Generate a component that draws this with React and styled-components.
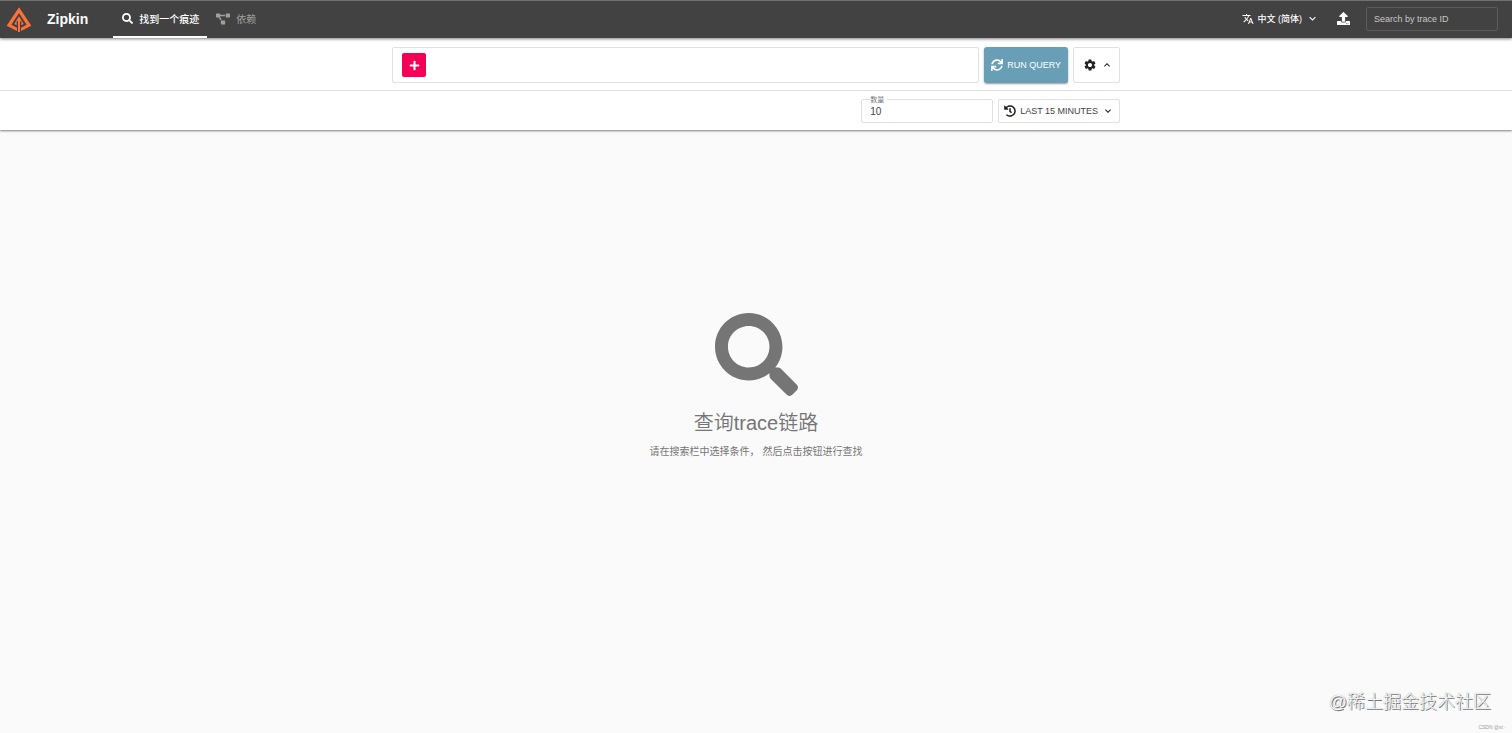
import React, { useState } from "react";
import styled, { createGlobalStyle } from "styled-components";
import {
  FaSearch,
  FaProjectDiagram,
  FaUpload,
  FaPlus,
  FaSync,
  FaHistory,
} from "react-icons/fa";
import { MdTranslate, MdExpandMore, MdExpandLess, MdSettings } from "react-icons/md";

const GlobalStyle = createGlobalStyle`
  *, *::before, *::after {
    box-sizing: border-box;
  }

  html, body, #root {
    height: 100%;
  }

  body {
    margin: 0;
    background: #fafafa;
    color: #212121;
    font-family: "Liberation Sans", "Noto Sans CJK SC", sans-serif;
    font-size: 10px;
  }

  button, input {
    font-family: inherit;
  }

  svg {
    display: block;
    flex: none;
  }
`;

const Page = styled.div`
  display: flex;
  flex-direction: column;
  min-height: 100%;
`;

const AppBar = styled.header`
  display: flex;
  align-items: stretch;
  height: 38px;
  padding: 0 14px 0 6px;
  background: #424242;
  border-top: 1px solid #6e736f;
  box-shadow: 0 1px 3px rgba(0, 0, 0, 0.5);
  z-index: 2;
`;

const Brand = styled.a`
  display: flex;
  align-items: center;
  gap: 15px;
  margin-right: 25px;
  padding-bottom: 1px;
  color: #fff;
  font-size: 14px;
  font-weight: 700;
  text-decoration: none;
`;

const Nav = styled.nav`
  display: flex;
`;

const NavLink = styled.a`
  display: flex;
  align-items: center;
  gap: 6px;
  padding: 0 8px 0 9px;
  border-bottom: 2px solid ${props => (props.$active ? "#fff" : "transparent")};
  color: ${props => (props.$active ? "#fff" : "#a0a0a0")};
  font-size: 10px;
  font-weight: ${props => (props.$active ? 500 : 400)};
  text-decoration: none;
`;

const BarTools = styled.div`
  display: flex;
  align-items: center;
  margin-left: auto;
  padding-bottom: 2px;
`;

const LanguageButton = styled.button`
  display: flex;
  align-items: center;
  gap: 4px;
  padding: 0;
  border: 0;
  background: none;
  color: #fff;
  font-size: 9px;
  font-weight: 500;
  cursor: pointer;
`;

const UploadButton = styled.button`
  margin: 0 16px 0 18px;
  padding: 0;
  border: 0;
  background: none;
  color: #fff;
  cursor: pointer;
`;

const TraceIdInput = styled.input`
  width: 132px;
  height: 24px;
  padding: 0 7px;
  border: 1px solid #5c5c5c;
  border-radius: 2px;
  background: transparent;
  color: #fff;
  font-size: 9px;

  &::placeholder {
    color: #c8c8c8;
    opacity: 1;
  }
`;

const SearchPanel = styled.form`
  background: #fff;
  box-shadow: 0 1px 2px rgba(0, 0, 0, 0.5);
  z-index: 1;
`;

const PanelRow = styled.div`
  padding: ${props => (props.$divided ? "9px 0 7px" : "8px 0 7px")};
  border-bottom: ${props => (props.$divided ? "1px solid #e0e0e0" : "0")};
`;

const Container = styled.div`
  display: flex;
  justify-content: flex-end;
  gap: 5px;
  max-width: 728px;
  margin: 0 auto;
`;

const CriteriaBox = styled.div`
  display: flex;
  flex: 1;
  align-items: center;
  height: 36px;
  padding: 0 9px;
  border: 1px solid #e0e0e0;
  border-radius: 2px;
`;

const AddButton = styled.button`
  display: flex;
  align-items: center;
  justify-content: center;
  width: 24px;
  height: 24px;
  padding: 0;
  border: 0;
  border-radius: 2px;
  background: #f50057;
  color: #fff;
  cursor: pointer;
`;

const RunButton = styled.button`
  display: flex;
  align-items: center;
  gap: 4px;
  height: 36px;
  padding: 0 7px;
  border: 0;
  border-radius: 3px;
  background: #689fb6;
  box-shadow: 0 1px 2px rgba(0, 0, 0, 0.4);
  color: #fff;
  font-size: 9px;
  cursor: pointer;
`;

const OutlinedButton = styled.button`
  display: flex;
  align-items: center;
  gap: 4px;
  height: ${props => (props.$tall ? "36px" : "24px")};
  padding: ${props => (props.$tall ? "0 6px 0 9px" : "0 5px")};
  border: 1px solid #e0e0e0;
  border-radius: 2px;
  background: #fff;
  color: #212121;
  font-size: 9px;
  cursor: pointer;
`;

const ButtonText = styled.span`
  color: #424242;
`;

const LimitField = styled.fieldset`
  width: 132px;
  height: 28px;
  margin: -4px 0 0;
  padding: 0 8px;
  border: 1px solid #e0e0e0;
  border-radius: 2px;

  legend {
    height: 9px;
    padding: 0 3px 0 0;
    color: #757575;
    font-size: 7px;
    line-height: 9px;
  }

  input {
    display: block;
    width: 100%;
    height: 14px;
    padding: 0;
    border: 0;
    outline: 0;
    background: transparent;
    color: #424242;
    font-size: 10px;
  }
`;

const EmptyState = styled.main`
  display: flex;
  flex: 1;
  flex-direction: column;
  align-items: center;
  padding-top: 183px;
  color: #757575;
  text-align: center;

  h1 {
    margin: 12px 0 7px;
    font-size: 20px;
    font-weight: 350;
    line-height: 30px;
  }

  p {
    margin: 0;
    font-size: 10px;
    line-height: 14px;
  }
`;

const Watermark = styled.footer`
  display: flex;
  flex-direction: column;
  align-items: flex-end;
  gap: 10px;
  padding: 0 6px 2px 0;
`;

const Community = styled.span`
  margin-right: 15px;
  color: #fafafa;
  font-size: 18px;
  font-weight: 300;
  line-height: 24px;
  text-shadow: 1px 1px 0 #777, 0 0 1px #999;
`;

const Credit = styled.span`
  color: #9e9e9e;
  font-size: 5px;
  line-height: 7px;
`;

const ZipkinLogo = () => (
  <svg width="26" height="26" viewBox="0 0 78 78" aria-hidden="true">
    <path fill="#fe7139" d="M39 4 L76 59 L39 78 L2 59 Z" />
    <path fill="#424242" d="M39 21 L62 56 L45 65 V78 H33 V65 L16 56 Z" />
    <path fill="#fe7139" d="M39 31 L53 54 L46 58 V46 H32 V58 L25 54 Z" />
    <path fill="#fe7139" d="M36 44 H42 V78 H36 Z" />
  </svg>
);

const App = () => {
  const [showSettings, setShowSettings] = useState(true);
  const [limit, setLimit] = useState("10");

  return (
    <Page>
      <GlobalStyle />
      <AppBar>
        <Brand href="#">
          <ZipkinLogo />
          Zipkin
        </Brand>
        <Nav>
          <NavLink href="#search" $active>
            <FaSearch size={11} />
            找到一个痕迹
          </NavLink>
          <NavLink href="#dependency">
            <FaProjectDiagram size={14} />
            依赖
          </NavLink>
        </Nav>
        <BarTools>
          <LanguageButton type="button">
            <MdTranslate size={12} />
            中文 (简体)
            <MdExpandMore size={13} />
          </LanguageButton>
          <UploadButton type="button" aria-label="Upload JSON">
            <FaUpload size={13} />
          </UploadButton>
          <TraceIdInput aria-label="Search by trace ID" placeholder="Search by trace ID" />
        </BarTools>
      </AppBar>

      <SearchPanel onSubmit={e => e.preventDefault()}>
        <PanelRow $divided>
          <Container>
            <CriteriaBox>
              <AddButton type="button" aria-label="Add criterion">
                <FaPlus size={11} />
              </AddButton>
            </CriteriaBox>
            <RunButton type="submit">
              <FaSync size={12} />
              RUN QUERY
            </RunButton>
            <OutlinedButton
              type="button"
              $tall
              aria-label="Settings"
              onClick={() => setShowSettings(!showSettings)}
            >
              <MdSettings size={14} />
              {showSettings ? <MdExpandLess size={12} /> : <MdExpandMore size={12} />}
            </OutlinedButton>
          </Container>
        </PanelRow>
        {showSettings && (
          <PanelRow>
            <Container>
              <LimitField>
                <legend>
                  <label htmlFor="limit">数量</label>
                </legend>
                <input id="limit" value={limit} onChange={e => setLimit(e.target.value)} />
              </LimitField>
              <OutlinedButton type="button">
                <FaHistory size={12} />
                <ButtonText>LAST 15 MINUTES</ButtonText>
                <MdExpandMore size={12} />
              </OutlinedButton>
            </Container>
          </PanelRow>
        )}
      </SearchPanel>

      <EmptyState>
        <FaSearch size={83} />
        <h1>查询trace链路</h1>
        <p>请在搜索栏中选择条件， 然后点击按钮进行查找</p>
      </EmptyState>

      <Watermark>
        <Community>@稀土掘金技术社区</Community>
        <Credit>CSDN @xt ·</Credit>
      </Watermark>
    </Page>
  );
};

export default App;
